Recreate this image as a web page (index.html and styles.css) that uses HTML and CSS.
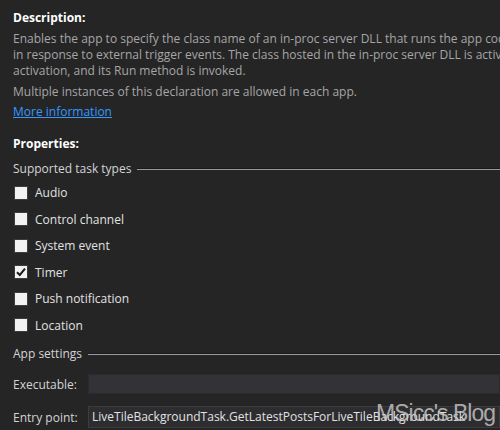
FILE: index.html
```html
<!DOCTYPE html>
<html>
<head>
<meta charset="utf-8">
<link rel="stylesheet" href="styles.css">
</head>
<body>
<div class="page">
  <h2 class="heading">Description:</h2>
  <div class="desc">
    <div class="line">Enables the app to specify the class name of an in-proc server DLL that runs the app code</div>
    <div class="line">in response to external trigger events. The class hosted in the in-proc server DLL is activated</div>
    <div class="line">activation, and its Run method is invoked.</div>
  </div>
  <div class="desc multi">Multiple instances of this declaration are allowed in each app.</div>
  <a class="more" href="#">More information</a>

  <h2 class="heading props">Properties:</h2>
  <div class="group"><span>Supported task types</span><span class="rule"></span></div>
  <ul class="checks">
    <li><span class="box"></span>Audio</li>
    <li><span class="box"></span>Control channel</li>
    <li><span class="box"></span>System event</li>
    <li><span class="box checked"><svg viewBox="0 0 14 14" width="14" height="14"><path d="M3 7.2 L5.8 10 L11 3.6" fill="none" stroke="#1a1a1a" stroke-width="2"/></svg></span>Timer</li>
    <li><span class="box"></span>Push notification</li>
    <li><span class="box"></span>Location</li>
  </ul>
  <div class="group app"><span>App settings</span><span class="rule"></span></div>
  <div class="field"><label>Executable:</label><div class="input"></div></div>
  <div class="field"><label>Entry point:</label><div class="input filled">LiveTileBackgroundTask.GetLatestPostsForLiveTileBackgroundTask</div></div>
</div>
<div class="watermark">MSicc's Blog</div>
</body>
</html>
```
FILE: styles.css
```css
html, body {
  margin: 0;
  padding: 0;
  width: 500px;
  height: 430px;
  overflow: hidden;
  background: #252526;
}
body {
  font-family: "Open Sans", "Noto Sans", sans-serif;
  font-size: 12px;
  color: #d4d4d4;
  position: relative;
}
.page {
  padding: 10px 0 0 13px;
  white-space: nowrap;
  overflow: hidden;
}
.heading {
  margin: 0;
  font-size: 12px;
  font-weight: 700;
  color: #ffffff;
  line-height: 16px;
}
.desc {
  color: #a6a6a6;
  line-height: 16px;
  margin-top: 5px;
  overflow: hidden;
}
.desc.multi {
  margin-top: 5px;
}
.more {
  display: inline-block;
  margin-top: 4px;
  color: #3399ff;
  text-decoration: underline;
  line-height: 16px;
}
.props {
  margin-top: 16px;
}
.group {
  display: flex;
  align-items: center;
  margin-top: 9px;
  line-height: 16px;
  color: #d4d4d4;
}
.group .rule {
  flex: 1;
  height: 1px;
  margin-left: 6px;
  background: #9a9a9a;
  box-shadow: 0 -1px 0 #1a1a1a;
}
.group.app {
  margin-top: 13px;
}
.checks {
  list-style: none;
  margin: 0;
  padding: 0;
}
.checks li {
  display: flex;
  align-items: center;
  height: 16px;
  margin-top: 10.5px;
  color: #e2e2e2;
}
.checks li:first-child {
  margin-top: 7.5px;
}
.box {
  width: 14px;
  height: 14px;
  box-sizing: border-box;
  background: #f2f2f2;
  border: 1px solid #3c3c3c;
  margin: 0 7px 0 1px;
  display: inline-flex;
}
.box svg {
  margin: -1px;
}
.field {
  display: flex;
  align-items: center;
  margin-top: 12px;
}
.field label {
  width: 75px;
  color: #d4d4d4;
}
.input {
  flex: 1;
  height: 18px;
  background: #333337;
  border: 1px solid #2a2a2c;
  color: #e2e2e2;
  line-height: 18px;
  padding-left: 3px;
  overflow: hidden;
}
.input.filled {
  background: #2d2d30;
  border-color: #3c3c3f;
  height: 20px;
  line-height: 20px;
}
.watermark {
  position: absolute;
  right: 5px;
  bottom: 3px;
  font-family: "Liberation Sans", sans-serif;
  font-size: 23px;
  line-height: 28px;
  letter-spacing: -1px;
  color: rgba(205, 205, 205, 0.8);
}
```
